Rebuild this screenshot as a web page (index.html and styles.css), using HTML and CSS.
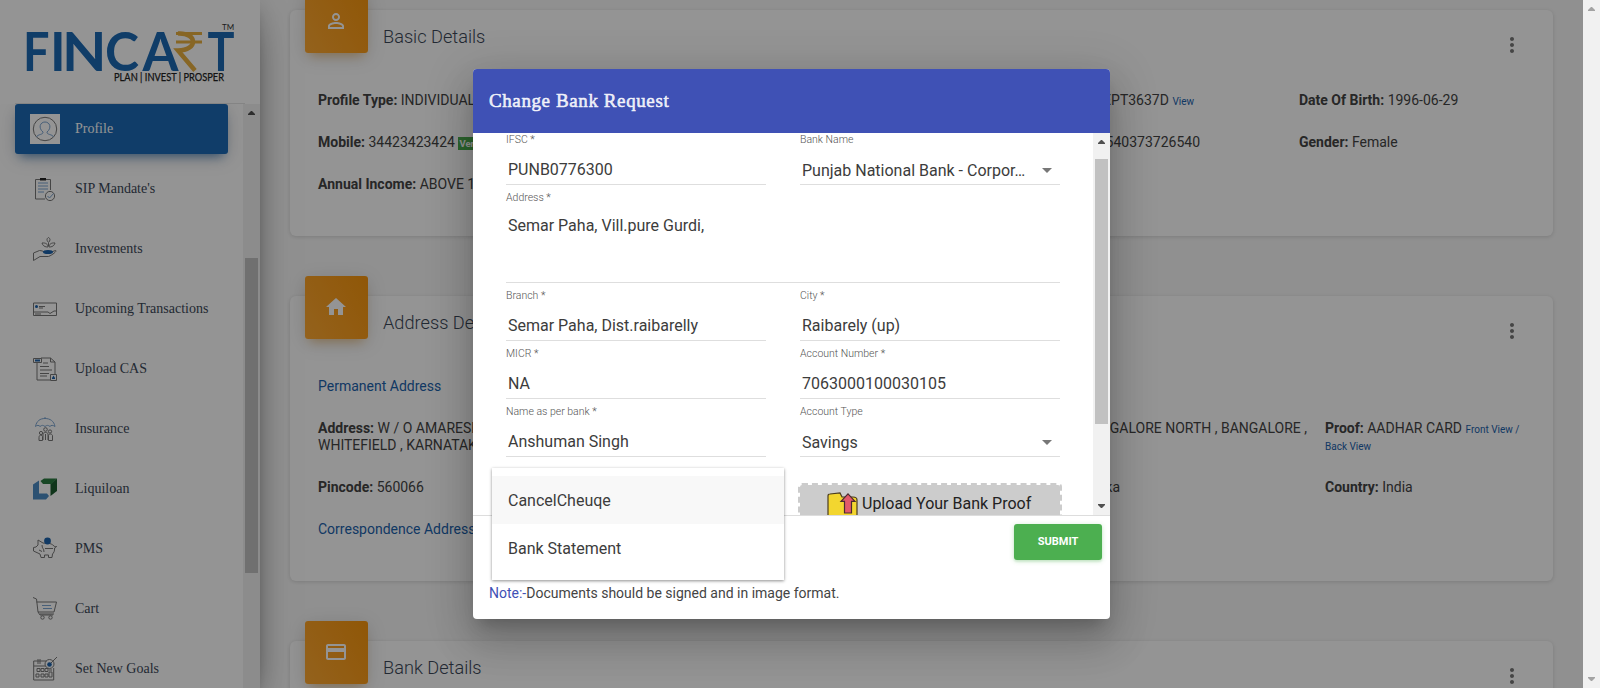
FILE: index.html
```html
<!DOCTYPE html>
<html lang="en">
<head>
<meta charset="utf-8">
<title>Fincart - Profile</title>
<link rel="stylesheet" href="styles.css">
</head>
<body>
<div class="page">
  <div class="app">
    <aside class="sidebar">
      <div class="brand">
        <svg width="230" height="80" viewBox="0 0 230 80">
          <g class="logo-main">
            <text x="8" y="58" textLength="26.500" lengthAdjust="spacingAndGlyphs">F</text>
            <text x="35" y="58">I</text>
            <text x="47" y="58" textLength="44.500" lengthAdjust="spacingAndGlyphs">N</text>
            <text x="90" y="58" textLength="34" lengthAdjust="spacingAndGlyphs">C</text>
            <text x="127.500" y="58" textLength="36" lengthAdjust="spacingAndGlyphs">A</text>
            <text x="192.500" y="58" textLength="27" lengthAdjust="spacingAndGlyphs">T</text>
          </g>
          <g class="logo-rupee">
            <path class="bars" d="M161 20.500h26M161 29h26"/>
            <path d="M163 20.500c20-1 20 17 0 17l17 20"/>
          </g>
          <text class="logo-tm" x="207" y="17">TM</text>
          <text class="logo-tag" x="99" y="68" textLength="110" lengthAdjust="spacingAndGlyphs">PLAN | INVEST | PROSPER</text>
        </svg>
      </div>
      <div class="side-body">
        <nav class="menu">
          <a class="item active"><span class="ico boxed"><svg width="30" height="30" viewBox="0 0 30 30"><circle cx="15" cy="15" r="11.700" class="k"/><path class="b" d="M6.500 23c1-3 7-2 6.500-5-5-4-3-10 2-10s7 6 2 10c-.5 3 5.500 2 6.500 5"/></svg></span><span>Profile</span></a>
          <a class="item"><span class="ico"><svg width="24" height="24" viewBox="0 0 24 24"><path class="k" d="M17.500 13V2.500h-15v19.500H12"/><path class="kf" d="M7 1h6v2.500H7z"/><path class="b" d="M5 6h10M5 9h10M5 12h10M5 15h6"/><circle class="k" cx="17" cy="19" r="4.600"/><path class="b" d="M14.500 19l2 2 4-4.500"/></svg></span><span>SIP Mandate's</span></a>
          <a class="item"><span class="ico"><svg width="24" height="24" viewBox="0 0 24 24"><path class="k" d="M.5 16l6-2.500c4 0 5 2.500 9 2.500l7-2.500c2 0-2 4-7 6H7l-6.500 4zM15.500 9V6M15.500 5.500c-2-2-2-4 0-5 2 1 2 3 0 5zM15 10c-1 0-5 0-6-4 4-.5 6 1.500 6 4zM16 10c1 0 5 0 6-4-4-.5-6 1.500-6 4z"/><ellipse class="bf" cx="15" cy="15" rx="5" ry="2"/></svg></span><span>Investments</span></a>
          <a class="item"><span class="ico"><svg width="24" height="24" viewBox="0 0 24 24"><path class="k" d="M.5 6h23v12.500H.5zM6 9.500h6M6 11h4M.5 15H15l2 1.500 4-2.500h2.500M2 17h6"/><circle class="bf" cx="3.500" cy="9.500" r="1.500"/></svg></span><span>Upcoming Transactions</span></a>
          <a class="item"><span class="ico"><svg width="24" height="24" viewBox="0 0 24 24"><path class="k" d="M4 6v17h13M8 1h9.500l4.500 4v12M17.500 1v4H22M10 6h5M7 9.500h9M7 13h12M7 16.500h9M7 19h7"/><path class="k" d="M.5 1.500h8v4h-8zM17.500 17.500h6v6h-6z"/><path class="bf" d="M2 2.500h5v2H2zM19 21l1.500-2.500L22 21v1h-3z"/></svg></span><span>Upload CAS</span></a>
          <a class="item"><span class="ico"><svg width="24" height="24" viewBox="0 0 24 24"><path class="b" d="M2.500 9.500C3.500 4 7 1.500 12 1.500s9 2.500 10 8c-2-1.500-4-1.500-5 0-2-1.500-3-1.500-5 0-2-1.500-3-1.500-5 0-1-1.500-3-1.500-4.500 0zM12 1.500V0"/><g class="k"><circle cx="12.500" cy="12.500" r="1.800"/><circle cx="8" cy="16" r="1.600"/><circle cx="17" cy="14.500" r="1.600"/><path d="M6 23.500v-3c0-3 3-3 3.500-1v4zM10 23v-6c0-2 5-2 5 0v6M15.500 23.500v-5c0-2 3.500-2 4 0v5zM12.500 17v6"/></g></svg></span><span>Insurance</span></a>
          <a class="item"><span class="ico"><svg width="24" height="24" viewBox="0 0 24 24"><path fill="#4c8cc4" d="M0 7.500l6-4V16.500h8l2 2.500-3 3.500H0z"/><path fill="#1d5c30" d="M17.500 7L24 1.500V14l-6.500 5z"/><path fill="#2a7a40" d="M7.500 4L11 1.500h13L18.500 7H10z"/></svg></span><span>Liquiloan</span></a>
          <a class="item"><span class="ico"><svg width="24" height="24" viewBox="0 0 24 24"><path class="k" d="M5 8V3l5 3c4 1 7-1 11 3 1 1 2 1 2.500 0-.5 2-2 2-2 2 .5 3-1 5-2 6l-.5 3.500h-3.500V18h-4v2.500H8L7 17l-6.500-3v-3.500L3 10zM9 8c0 4 2 3 2 7M6 13l3 1.500M12 11.500h8"/><circle class="bf" cx="14.500" cy="4" r="3.400"/></svg></span><span>PMS</span></a>
          <a class="item"><span class="ico"><svg width="24" height="24" viewBox="0 0 24 24"><path class="k" d="M0 .5l3.500 1.500L5 15l2 3h13M3.500 5h20l-2.500 10H5M7 17h14"/><path class="b" d="M9 8.500h9M10 11.500h9"/><circle class="k" cx="9.500" cy="20.500" r="1.700"/><circle class="k" cx="17.500" cy="20.500" r="1.700"/></svg></span><span>Cart</span></a>
          <a class="item"><span class="ico"><svg width="24" height="24" viewBox="0 0 24 24"><path class="k" d="M.7 4h13M.7 4v19h20V11M.7 9h12M5 2v5M7 2v5M4 11.500h3v3H4zM8 11.500h3v3H8zM12 11.500h3v3h-3zM16 13h3M3 17h3v3H3zM8 17h3v3H8zM12 17h3v3h-3zM16 15h3v5h-3zM18 6l6-6"/><circle class="k" cx="16.500" cy="7" r="4.500"/><circle class="bf" cx="16.500" cy="7.500" r="2.300"/></svg></span><span>Set New Goals</span></a>
        </nav>
        <div class="sbar"><i class="up"></i><div class="thumb side-thumb"></div></div>
      </div>
    </aside>

    <main class="content">
      <section class="card basic">
        <header class="card-head">
          <span class="tile"><svg width="24" height="24" viewBox="0 0 24 24"><path d="M12 5.900a2.100 2.100 0 110 4.200 2.100 2.100 0 010-4.200m0 9c2.970 0 6.100 1.460 6.100 2.100v1.100H5.900V17c0-.64 3.130-2.100 6.100-2.100M12 4C9.790 4 8 5.790 8 8s1.790 4 4 4 4-1.790 4-4-1.790-4-4-4zm0 9c-2.670 0-8 1.340-8 4v3h16v-3c0-2.660-5.330-4-8-4z"/></svg></span>
          <h4>Basic Details</h4>
          <svg class="dots" width="24" height="24" viewBox="0 0 24 24"><path d="M12 8c1.100 0 2-.9 2-2s-.9-2-2-2-2 .9-2 2 .9 2 2 2zm0 2c-1.100 0-2 .9-2 2s.9 2 2 2 2-.9 2-2-.9-2-2-2zm0 6c-1.100 0-2 .9-2 2s.9 2 2 2 2-.9 2-2-.9-2-2-2z"/></svg>
        </header>
        <div class="rows">
          <div class="row"><p><b>Profile Type:</b> INDIVIDUAL</p><p></p><p class="pan"><b>PAN:</b> AEPT3637D <a>View</a></p><p><b>Date Of Birth:</b> 1996-06-29</p></div>
          <div class="row"><p><b>Mobile:</b> 34423423424 <em>Verified</em></p><p></p><p class="aadhaar"><b>Aadhaar:</b> 540373726540</p><p><b>Gender:</b> Female</p></div>
          <div class="row"><p><b>Annual Income:</b> ABOVE 1 CR</p></div>
        </div>
      </section>

      <section class="card address">
        <header class="card-head">
          <span class="tile"><svg width="24" height="24" viewBox="0 0 24 24"><path d="M10 20v-6h4v6h5v-8h3L12 3 2 12h3v8z"/></svg></span>
          <h4>Address Details</h4>
          <svg class="dots" width="24" height="24" viewBox="0 0 24 24"><path d="M12 8c1.100 0 2-.9 2-2s-.9-2-2-2-2 .9-2 2 .9 2 2 2zm0 2c-1.100 0-2 .9-2 2s.9 2 2 2 2-.9 2-2-.9-2-2-2zm0 6c-1.100 0-2 .9-2 2s.9 2 2 2 2-.9 2-2-.9-2-2-2z"/></svg>
        </header>
        <div class="rows">
          <p class="link">Permanent Address</p>
          <div class="addr-row">
            <p class="addr"><span><b>Address:</b> W / O AMARESH</span><span>BANGALORE NORTH , BANGALORE ,</span><br>WHITEFIELD , KARNATAKA</p>
            <p><b>Proof:</b> AADHAR CARD <a>Front View / Back View</a></p>
          </div>
          <div class="addr-row">
            <p class="addr pin"><span><b>Pincode:</b> 560066</span><span><b>State:</b> Karnataka</span></p>
            <p><b>Country:</b> India</p>
          </div>
          <p class="link">Correspondence Address</p>
        </div>
      </section>

      <section class="card">
        <header class="card-head">
          <span class="tile"><svg width="24" height="24" viewBox="0 0 24 24"><path d="M20 4H4c-1.110 0-1.990.89-1.990 2L2 18c0 1.110.89 2 2 2h16c1.110 0 2-.89 2-2V6c0-1.110-.89-2-2-2zm0 14H4v-6h16v6zm0-10H4V6h16v2z"/></svg></span>
          <h4>Bank Details</h4>
          <svg class="dots" width="24" height="24" viewBox="0 0 24 24"><path d="M12 8c1.100 0 2-.9 2-2s-.9-2-2-2-2 .9-2 2 .9 2 2 2zm0 2c-1.100 0-2 .9-2 2s.9 2 2 2 2-.9 2-2-.9-2-2-2zm0 6c-1.100 0-2 .9-2 2s.9 2 2 2 2-.9 2-2-.9-2-2-2z"/></svg>
        </header>
        <div class="rows"></div>
      </section>
    </main>

    <div class="overlay">
      <div class="modal">
        <div class="modal-head">Change Bank Request</div>
        <div class="modal-body">
          <form class="form">
            <div class="field"><label>IFSC *</label><div class="val">PUNB0776300</div></div>
            <div class="field"><label>Bank Name</label><div class="val sel"><span>Punjab National Bank - Corpor…</span><i></i></div></div>
            <div class="field wide"><label>Address *</label><div class="val">Semar Paha, Vill.pure Gurdi,</div></div>
            <div class="field"><label>Branch *</label><div class="val">Semar Paha, Dist.raibarelly</div></div>
            <div class="field"><label>City *</label><div class="val">Raibarely (up)</div></div>
            <div class="field"><label>MICR *</label><div class="val">NA</div></div>
            <div class="field"><label>Account Number *</label><div class="val">7063000100030105</div></div>
            <div class="field"><label>Name as per bank *</label><div class="val">Anshuman Singh</div></div>
            <div class="field"><label>Account Type</label><div class="val sel"><span>Savings</span><i></i></div></div>
            <div class="upload">
              <svg width="31" height="30" viewBox="0 0 31 30"><path d="M1 27V4q0-2 2-2l10-1 2 4h11q4 0 4 3v20z" fill="#f3d62f" stroke="#4a3b1e" stroke-width="1.200"/><path d="M2 14v9l4 4H2z" fill="#f0a52a"/><path d="M21 1.800l7 7.500h-3.500V21h-7V9.300H14z" fill="#e2596a" stroke="#4a2b2e" stroke-width="1.200"/></svg>
              <span>Upload Your Bank Proof</span>
            </div>
          </form>
          <div class="sbar light"><i class="up"></i><div class="thumb"></div><i class="down"></i></div>
        </div>
        <div class="modal-foot">
          <button class="submit">SUBMIT</button>
          <p class="note"><span>Note:-</span>Documents should be signed and in image format.</p>
        </div>
        <div class="dropdown"><div class="opt on">CancelCheuqe</div><div class="opt">Bank Statement</div></div>
      </div>
    </div>
  </div>
  <div class="sbar light disabled"><i class="up"></i><i class="down"></i></div>
</div>
</body>
</html>
```
FILE: styles.css
```css
* { box-sizing: border-box; }
body { margin: 0; font-family: Roboto, sans-serif; font-size: 14px; color: #444; overflow: hidden; }
p, h4 { margin: 0; }
.page { display: flex; width: 1600px; height: 688px; }
.app { position: relative; display: flex; flex: 1; overflow: hidden; background: #f8f8f8; }

/* sidebar */
.sidebar { width: 260px; flex: none; background: #fff; display: flex; flex-direction: column; z-index: 1;
  box-shadow: 0 16px 38px -12px rgba(0,0,0,.56), 0 4px 25px 0 rgba(0,0,0,.12), 0 8px 10px -5px rgba(0,0,0,.2); }
.brand { height: 104px; margin: 0 15px; padding-top: 13px; border-bottom: 1px solid #e3e3e3; }
.brand svg { display: block; overflow: visible; }
.logo-main { font: 700 53px Lato, sans-serif; fill: #1d6ab4; }
.logo-rupee { fill: none; stroke: #e8b040; stroke-width: 4.500; }
.logo-rupee .bars { stroke-width: 3; }
.logo-tm { font: 400 8px Lato, sans-serif; fill: #333; }
.logo-tag { font: 400 10.500px Lato, sans-serif; fill: #222; stroke: #222; stroke-width: .25px; }
.side-body { display: flex; flex: 1; min-height: 0; }
.menu { flex: 1; display: flex; flex-direction: column; gap: 10px; padding: 0 15px; overflow: hidden; }
.item { display: flex; align-items: center; gap: 15px; flex: none; height: 50px; padding: 0 15px; border-radius: 3px;
  font: 14px "Liberation Serif", serif; color: #3c4858; white-space: nowrap; }
.item.active { background: #1c6ab6; color: #fff; box-shadow: 0 4px 20px 0 rgba(0,0,0,.14), 0 7px 10px -5px rgba(28,106,182,.7); }
.ico { width: 30px; height: 30px; display: flex; align-items: center; justify-content: center; }
.boxed { background: #fff; }
.k { fill: none; stroke: #777; stroke-width: 1; }
.kf { fill: #222; }
.b { fill: none; stroke: #7ba4d0; stroke-width: 1; }
.bf { fill: #1c62ac; }

/* scrollbars */
.sbar { width: 17px; flex: none; background: #f1f1f1; position: relative; display: flex; flex-direction: column; padding: 0 2px; }
.sbar i { width: 7px; height: 4px; background: #505050; margin: 0 auto; }
.up { clip-path: polygon(3px 0, 4px 0, 7px 3px, 7px 4px, 0 4px, 0 3px); }
.down { clip-path: polygon(0 0, 7px 0, 7px 1px, 4px 4px, 3px 4px, 0 1px); }
.sbar .up { margin-top: 7px; }
.sbar .down { margin-top: auto; margin-bottom: 7px; }
.disabled i { background: #a3a3a3; }
.thumb { height: 265px; margin-top: 15px; background: #c1c1c1; }
.side-thumb { height: 315px; margin-top: 143px; }

/* cards */
.content { flex: 1; padding: 10px 30px 0; display: flex; flex-direction: column; gap: 60px; }
.card { flex: none; background: #fff; border-radius: 6px; box-shadow: 0 1px 4px 0 rgba(0,0,0,.14); }
.basic { height: 226px; }
.address { height: 285px; }
.card-head { display: flex; height: 43px; padding: 0 15px; }
.tile { flex: none; width: 63px; height: 63px; margin-top: -20px; border-radius: 3px; display: flex; align-items: center; justify-content: center;
  background: linear-gradient(60deg, #ffa932, #f8960d); box-shadow: 0 4px 20px 0 rgba(0,0,0,.14), 0 7px 10px -5px rgba(255,152,0,.4); }
.tile svg { fill: #fff; margin: 0 1px 1px 0; }
.card-head h4 { flex: 1; margin: 14px 0 0 15px; font-weight: 300; font-size: 18.200px; line-height: 26px; color: #3c4858; }
.dots { margin: 23px 14px 0 0; fill: #777; }
.rows { display: flex; flex-direction: column; gap: 25px; padding: 39px 28px 0; line-height: 17px; }
.row { display: grid; grid-template-columns: repeat(4, 327px); grid-auto-rows: 17px; margin-right: -150px; white-space: nowrap; }
.rows a, .link { color: #1c62ac; }
.rows a { font-size: 10px; line-height: 12px; }
.row em { font: 700 9.500px/12px Roboto, sans-serif; color: #fff; background: #4caf50; padding: 1px; }
.pan { width: 246px; text-align: right; margin-left: -24px; }
.aadhaar { width: 228px; text-align: right; }
.addr-row { display: grid; grid-template-columns: 989px 200px; column-gap: 18px; }
.addr span { display: inline-block; vertical-align: top; width: 600px; white-space: nowrap; }
.addr span + span { width: 389px; text-align: right; }
.addr.pin span + span { width: 202px; }

/* modal */
.overlay { position: absolute; inset: 0; z-index: 2; background: rgba(0,0,0,.42); display: flex; justify-content: center; align-items: center; }
.modal { position: relative; width: 637px; height: 550px; background: #fff; border-radius: 4px; display: flex; flex-direction: column;
  box-shadow: 0 11px 15px -7px rgba(0,0,0,.2), 0 24px 38px 3px rgba(0,0,0,.14), 0 9px 46px 8px rgba(0,0,0,.12); }
.modal-head { height: 64px; flex: none; padding-left: 16px; background: #3f51b5; border-radius: 4px 4px 0 0; color: rgba(255,255,255,.87);
  font: 400 19px/64px "Liberation Serif", serif; letter-spacing: .6px; -webkit-text-stroke: .6px rgba(255,255,255,.87); }
.modal-body { display: flex; height: 383px; flex: none; overflow: hidden; border-bottom: 1px solid #ddd; }
.form { flex: 1; margin-top: -6px; padding-left: 33px; display: grid; grid-template-columns: 260px 260px; column-gap: 34px; align-content: start; }
.field { height: 58px; padding-top: 7px; border-bottom: 1px solid #dedede; }
.field label { display: block; font-size: 10.500px; font-weight: 300; line-height: 12px; color: #555; }
.val { margin-top: 14px; padding-left: 2px; font-size: 16px; line-height: 20px; color: #3c3c3c; white-space: nowrap; }
.wide { grid-column: 1 / 3; height: 98px; }
.wide .val { margin-top: 12px; }
.sel { display: flex; align-items: center; justify-content: space-between; padding-right: 8px; position: relative; top: 1px; }
.sel i { border: 5px solid transparent; border-top-color: #777; border-bottom: 0; margin-bottom: 2px; }
.upload { grid-column: 2; width: 264px; height: 46px; margin: 26px 0 0 -2px; border: 2px dashed #ccc; border-radius: 4px; background: #ccc; background-clip: padding-box;
  display: flex; gap: 4px; padding: 7px 0 0 27px; font-size: 16px; line-height: 23px; color: #222; white-space: nowrap; }
.modal-foot { padding: 8px 8px 0 16px; display: flex; flex-direction: column; }
.submit { align-self: flex-end; width: 88px; height: 36px; padding: 0 0 2px; border: 0; border-radius: 3px; background: #4caf50; color: #fff;
  font: 700 11px Roboto, sans-serif; box-shadow: 0 2px 2px 0 rgba(76,175,80,.14), 0 1px 5px 0 rgba(76,175,80,.3); }
.note { margin-top: 23px; line-height: 20px; }
.note span { color: #3f51b5; }
.dropdown { position: absolute; left: 19px; top: 399px; width: 292px; height: 112px; padding: 8px 0; background: #fff; box-shadow: 0 1px 3px rgba(0,0,0,.45); }
.opt { height: 48px; padding-left: 16px; font-size: 16px; line-height: 49px; color: #3c3c3c; }
.on { background: #f8f8f8; }
```
